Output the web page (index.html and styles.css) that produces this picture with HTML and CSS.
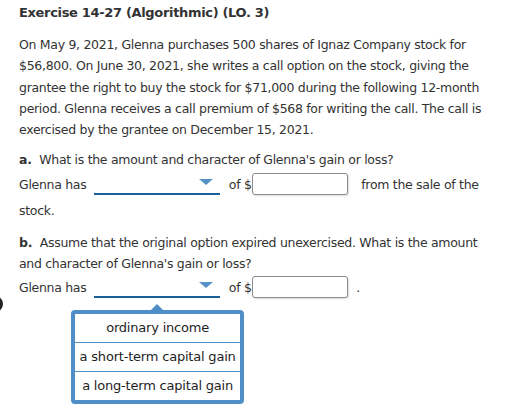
FILE: index.html
```html
<!DOCTYPE html>
<html>
<head>
<meta charset="utf-8">
<link rel="stylesheet" href="styles.css">
</head>
<body>
<div class="page">
  <h1 class="title">Exercise 14-27 (Algorithmic) (LO. 3)</h1>
  <p class="para">On May 9, 2021, Glenna purchases 500 shares of Ignaz Company stock for $56,800. On June 30, 2021, she writes a call option on the stock, giving the grantee the right to buy the stock for $71,000 during the following 12-month period. Glenna receives a call premium of $568 for writing the call. The call is exercised by the grantee on December 15, 2021.</p>

  <p class="question"><b class="label">a.</b> What is the amount and character of Glenna's gain or loss?</p>
  <div class="answer">Glenna has <span class="select"><span class="arrow"></span></span> of $<span class="input"></span> <span class="tail">from the sale of the</span> stock.</div>

  <p class="question q2"><b class="label">b.</b> Assume that the original option expired unexercised. What is the amount and character of Glenna's gain or loss?</p>
  <div class="answer">Glenna has <span class="select open"><span class="arrow"></span>
      <span class="menu">
        <span class="item">ordinary income</span>
        <span class="item">a short-term capital gain</span>
        <span class="item">a long-term capital gain</span>
      </span>
    </span> of $<span class="input"></span> <span class="tail dot">.</span></div>
</div>
<div class="edge"></div>
</body>
</html>
```
FILE: styles.css
```css
html, body {
  margin: 0;
  padding: 0;
  background: #ffffff;
}
body {
  font-family: "DejaVu Sans", Verdana, sans-serif;
  font-size: 12.5px;
  letter-spacing: -0.3px;
  color: #333333;
  position: relative;
  width: 529px;
  height: 410px;
  overflow: hidden;
}
.page {
  padding: 2px 0 0 19px;
  width: 494px;
}
.title {
  font-size: 13px;
  font-weight: bold;
  letter-spacing: -0.33px;
  line-height: 21px;
  margin: 0 0 11px 0;
  color: #333;
}
.para {
  margin: 0;
  line-height: 21.25px;
}
.question {
  margin: 9px 0 0 0;
  line-height: 21.25px;
  max-width: 478px;
}
.label {
  font-weight: bold;
  margin-right: 4px;
}
.q2 {
  margin-top: 8px;
}
.answer {
  line-height: 26px;
  margin-top: 1px;
  max-width: 480px;
}
.select {
  display: inline-block;
  position: relative;
  width: 126px;
  height: 20px;
  border-bottom: 2px solid #1b5f99;
  vertical-align: -6px;
  margin: 0 5px 0 4px;
}
.arrow {
  position: absolute;
  right: 7px;
  top: 6px;
  width: 0;
  height: 0;
  border-left: 7px solid transparent;
  border-right: 7px solid transparent;
  border-top: 6px solid #5592c8;
}
.input {
  display: inline-block;
  width: 94px;
  height: 20px;
  border: 1px solid #8c8c8c;
  border-radius: 3px;
  box-shadow: 1px 1px 2px rgba(0,0,0,0.15);
  vertical-align: -6px;
  margin-left: 0;
  background: #fff;
}
.tail {
  margin-left: 10px;
}
.dot {
  margin-left: 5px;
}
.menu {
  position: absolute;
  left: -23px;
  top: 34px;
  width: 165px;
  border: 4px solid #4f8ec6;
  border-radius: 4px;
  background: #fff;
  display: flex;
  flex-direction: column;
  color: #1e1e1e;
  font-size: 13px;
  letter-spacing: -0.2px;
  z-index: 5;
}
.menu::before {
  content: "";
  position: absolute;
  left: 76px;
  top: -10px;
  border-left: 6px solid transparent;
  border-right: 6px solid transparent;
  border-bottom: 6px solid #4f8ec6;
}
.item {
  display: block;
  height: 28px;
  line-height: 28px;
  text-align: center;
  white-space: nowrap;
}
.item + .item {
  border-top: 1px solid #4f8ec6;
}
.edge {
  position: absolute;
  left: -13px;
  top: 296px;
  width: 10px;
  height: 10px;
  border: 3px solid #222;
  border-radius: 50%;
}
```
